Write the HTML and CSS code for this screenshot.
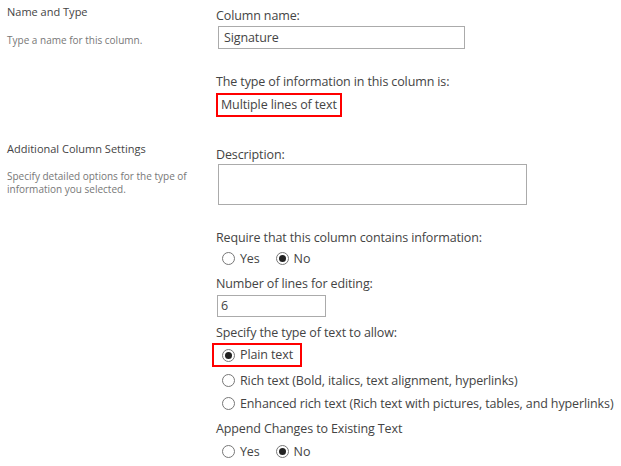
FILE: index.html
```html
<!DOCTYPE html>
<html>
<head>
	<meta charset="utf-8">
	<title>Column Settings</title>
	<link rel="stylesheet" href="styles.css">
</head>
<body>
	<div class="form">
		<div class="section first">
			<div class="info">
				<h3>Name and Type</h3>
				<p class="desc-one">Type a name for this column.</p>
			</div>
			<div class="fields">
				<div class="label">Column name:</div>
				<div class="input name">Signature</div>
				<div class="label gap">The type of information in this column is:</div>
				<div class="mark type">Multiple lines of text</div>
			</div>
		</div>
		<div class="section second">
			<div class="info">
				<h3>Additional Column Settings</h3>
				<p class="desc-two">Specify detailed options for the type of information you selected.</p>
			</div>
			<div class="fields">
				<div class="label">Description:</div>
				<div class="textarea"></div>
				<div class="label gap">Require that this column contains information:</div>
				<div class="radios pair">
					<span class="radio"></span><span class="text">Yes</span>
					<span class="radio on"></span><span class="text">No</span>
				</div>
				<div class="label lines">Number of lines for editing:</div>
				<div class="input small">6</div>
				<div class="label allow">Specify the type of text to allow:</div>
				<div class="radios mark plain">
					<span class="radio on"></span><span class="text">Plain text</span>
				</div>
				<div class="radios rich">
					<span class="radio"></span><span class="text">Rich text (Bold, italics, text alignment, hyperlinks)</span>
				</div>
				<div class="radios enhanced">
					<span class="radio"></span><span class="text">Enhanced rich text (Rich text with pictures, tables, and hyperlinks)</span>
				</div>
				<div class="label append">Append Changes to Existing Text</div>
				<div class="radios pair last">
					<span class="radio"></span><span class="text">Yes</span>
					<span class="radio on"></span><span class="text">No</span>
				</div>
			</div>
		</div>
	</div>
</body>
</html>
```

FILE: styles.css
```css
*{
	box-sizing: border-box;
}
body{
	margin: 0;
	background: white;
	font-family: "Open Sans", "Segoe UI", sans-serif;
	color: #444;
}
.section{
	display: flex;
}
.second{
	margin-top: 17px;
}
.info{
	flex: none;
	width: 216px;
	padding-left: 7px;
	padding-top: 4px;
}
.second .info{
	padding-top: 7px;
}
.info h3{
	margin: 0;
	font-size: 11px;
	font-weight: normal;
	line-height: 16px;
	color: #444;
}
.info p{
	margin: 0;
	font-size: 10px;
	line-height: 13px;
	color: #777;
	width: 190px;
}
.desc-one{
	padding-top: 14px;
}
.desc-two{
	padding-top: 13px;
}
.fields{
	flex: 1;
	padding-top: 7px;
	font-size: 12.5px;
	letter-spacing: -0.12px;
}
.second .fields{
	padding-top: 12px;
}
.label{
	line-height: 18px;
	white-space: nowrap;
}
.gap{
	margin-top: 24px;
}
.input{
	border: 1px solid #ababab;
	line-height: 21px;
	color: #444;
}
.name{
	width: 247px;
	height: 23px;
	margin: 1px 0 0 2px;
	padding-left: 5px;
}
.small{
	width: 109px;
	height: 22px;
	margin: 2px 0 0 1px;
	padding-left: 3px;
	line-height: 20px;
}
.textarea{
	width: 309px;
	height: 41px;
	margin-left: 2px;
	border: 1px solid #ababab;
}
.mark{
	display: inline-block;
	border: 2px solid #f00;
	height: 24px;
	line-height: 20px;
}
.type{
	margin-top: 2px;
	padding: 0 3px;
}
.radios{
	display: flex;
	align-items: center;
	height: 18px;
	padding-left: 6px;
	white-space: nowrap;
}
.radio{
	width: 13px;
	height: 13px;
	border: 1px solid #777;
	border-radius: 50%;
	display: flex;
	align-items: center;
	justify-content: center;
	flex: none;
}
.radio.on::after{
	content: "";
	width: 7px;
	height: 7px;
	border-radius: 50%;
	background: #222;
}
.text{
	margin-left: 5px;
}
.pair .text:nth-child(2){
	margin-right: 16px;
}
.pair{
	margin-top: 2px;
}
.lines{
	margin-top: 8px;
}
.allow{
	margin-top: 7px;
}
.plain{
	display: flex;
	width: 90px;
	height: 24px;
	margin: 1px 0 0 -4px;
	padding-left: 8px;
}
.rich{
	margin-top: 4px;
}
.enhanced{
	margin-top: 5px;
}
.append{
	margin-top: 8px;
}
.last{
	margin-top: 4px;
}
```
